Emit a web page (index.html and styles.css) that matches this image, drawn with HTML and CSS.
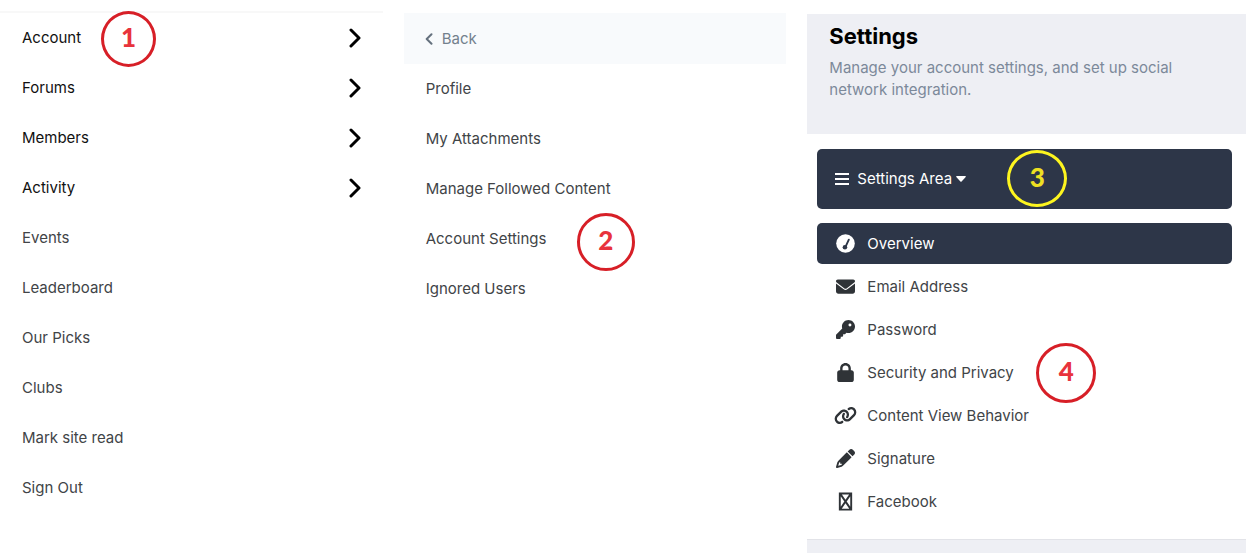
FILE: index.html
```html
<!DOCTYPE html>
<html lang="en">
<head>
<meta charset="utf-8">
<meta name="viewport" content="width=device-width, initial-scale=1">
<title>Account settings</title>
<link rel="stylesheet" href="styles.css">
</head>
<body>
<main class="screens">
  <nav class="screen menu" aria-label="Main menu">
    <ul class="menu-list">
      <li class="menu-row"><a class="menu-link parent" href="#">Account<svg class="chevron" viewBox="0 0 12 20"><path d="M2 2l8 8-8 8"/></svg></a><span class="callout callout-1">1</span></li>
      <li class="menu-row"><a class="menu-link parent" href="#">Forums<svg class="chevron" viewBox="0 0 12 20"><path d="M2 2l8 8-8 8"/></svg></a></li>
      <li class="menu-row"><a class="menu-link parent" href="#">Members<svg class="chevron" viewBox="0 0 12 20"><path d="M2 2l8 8-8 8"/></svg></a></li>
      <li class="menu-row"><a class="menu-link parent" href="#">Activity<svg class="chevron" viewBox="0 0 12 20"><path d="M2 2l8 8-8 8"/></svg></a></li>
      <li class="menu-row"><a class="menu-link" href="#">Events</a></li>
      <li class="menu-row"><a class="menu-link" href="#">Leaderboard</a></li>
      <li class="menu-row"><a class="menu-link" href="#">Our Picks</a></li>
      <li class="menu-row"><a class="menu-link" href="#">Clubs</a></li>
      <li class="menu-row"><a class="menu-link" href="#">Mark site read</a></li>
      <li class="menu-row"><a class="menu-link" href="#">Sign Out</a></li>
    </ul>
  </nav>

  <nav class="screen submenu" aria-label="Account menu">
    <button class="back" type="button"><svg class="back-icon" viewBox="0 0 8 12"><path d="M6.500 1.200L1.700 6l4.800 4.800"/></svg>Back</button>
    <ul class="menu-list">
      <li class="menu-row"><a class="menu-link" href="#">Profile</a></li>
      <li class="menu-row"><a class="menu-link" href="#">My Attachments</a></li>
      <li class="menu-row"><a class="menu-link" href="#">Manage Followed Content</a></li>
      <li class="menu-row"><a class="menu-link" href="#">Account Settings</a><span class="callout callout-2">2</span></li>
      <li class="menu-row"><a class="menu-link" href="#">Ignored Users</a></li>
    </ul>
  </nav>

  <section class="screen settings">
    <header class="settings-head">
      <h1 class="settings-title">Settings</h1>
      <p class="settings-text">Manage your account settings, and set up social network integration.</p>
    </header>
    <div class="settings-body">
      <div class="area">
        <button class="area-button" type="button">
          <svg class="bars" viewBox="0 0 14 12"><path d="M0 1h14M0 6h14M0 11h14"/></svg>
          <span>Settings Area</span>
          <svg class="caret" viewBox="0 0 10 6"><path d="M.800 0h8.400q1 .300.500 1L5.600 5.500q-.600.600-1.200 0L.300 1q-.500-.700.500-1z"/></svg>
        </button>
        <span class="callout callout-3">3</span>
      </div>
      <ul class="options">
        <li class="option-row"><a class="option current" href="#">
          <svg class="icon" viewBox="0 0 20 20"><circle cx="10" cy="10" r="9.800"/><path class="needle" d="M10 13.500L13.500 6"/><circle class="hub" cx="9.400" cy="14" r="2.400"/></svg>Overview</a></li>
        <li class="option-row"><a class="option" href="#">
          <svg class="icon" viewBox="0 0 512 512"><path d="M48 64C21.500 64 0 85.500 0 112c0 15.100 7.100 29.300 19.200 38.400L236.800 313.600c11.400 8.500 27 8.500 38.400 0L492.800 150.400c12.100-9.100 19.200-23.300 19.200-38.400 0-26.500-21.500-48-48-48H48zM0 176v208c0 35.300 28.700 64 64 64h384c35.300 0 64-28.700 64-64V176L294.400 339.200c-22.800 17.100-54 17.100-76.800 0L0 176z"/></svg>Email Address</a></li>
        <li class="option-row"><a class="option" href="#">
          <svg class="icon" viewBox="0 0 512 512"><path d="M336 352c97.200 0 176-78.800 176-176S433.200 0 336 0 160 78.800 160 176c0 18.700 2.900 36.800 8.300 53.700L7 391c-4.500 4.500-7 10.600-7 17v80c0 13.300 10.700 24 24 24h80c13.300 0 24-10.700 24-24v-40h40c13.300 0 24-10.700 24-24v-40h40c6.400 0 12.500-2.500 17-7l33.300-33.300c16.900 5.400 35 8.300 53.700 8.300zM376 96a40 40 0 1 1 0 80 40 40 0 1 1 0-80z"/></svg>Password</a></li>
        <li class="option-row"><a class="option" href="#">
          <svg class="icon" viewBox="-32 0 512 512"><path d="M144 144v48h160v-48c0-44.200-35.800-80-80-80s-80 35.800-80 80zM80 192v-48C80 64.500 144.500 0 224 0s144 64.500 144 144v48h16c35.300 0 64 28.700 64 64v192c0 35.300-28.700 64-64 64H64c-35.300 0-64-28.700-64-64V256c0-35.300 28.700-64 64-64h16z"/></svg>Security and Privacy</a><span class="callout callout-4">4</span></li>
        <li class="option-row"><a class="option" href="#">
          <svg class="icon wide" viewBox="0 0 640 512"><path d="M579.800 267.700c56.500-56.500 56.500-148 0-204.500-50-50-128.800-56.500-186.300-15.400l-1.600 1.100c-14.400 10.300-17.700 30.300-7.400 44.600s30.300 17.700 44.600 7.400l1.600-1.100c32.100-22.900 76-19.300 103.800 8.600 31.500 31.500 31.500 82.500 0 114L422.300 334.800c-31.500 31.500-82.500 31.500-114 0-27.900-27.900-31.500-71.800-8.600-103.800l1.100-1.600c10.300-14.400 6.900-34.400-7.400-44.600s-34.400-6.900-44.600 7.400l-1.100 1.600C206.500 251.200 213 330 263 380c56.500 56.500 148 56.500 204.500 0l112.300-112.300zM60.200 244.300c-56.500 56.500-56.500 148 0 204.500 50 50 128.800 56.500 186.300 15.400l1.600-1.100c14.400-10.300 17.700-30.300 7.400-44.600s-30.300-17.700-44.600-7.400l-1.600 1.100c-32.100 22.900-76 19.300-103.800-8.600C74 372 74 321 105.500 289.500l112.200-112.300c31.500-31.500 82.500-31.500 114 0 27.900 27.900 31.500 71.800 8.600 103.900l-1.100 1.600c-10.300 14.400-6.900 34.400 7.400 44.600s34.400 6.900 44.600-7.400l1.100-1.600C433.500 260.800 427 182 377 132c-56.500-56.500-148-56.500-204.500 0L60.200 244.300z"/></svg>Content View Behavior</a></li>
        <li class="option-row"><a class="option" href="#">
          <svg class="icon" viewBox="0 0 512 512"><path d="M410.300 231l11.300-11.300-33.900-33.900-62.100-62.100-33.900-33.900-11.300 11.300-22.600 22.600L58.600 322.900c-10.400 10.400-18 23.300-22.200 37.400L1 480.700c-2.500 8.400-.2 17.500 6.100 23.700s15.300 8.500 23.700 6.100l120.300-35.400c14.100-4.200 27-11.800 37.400-22.200l199.200-199.200 22.600-22.700zM160 399.400l-9.100 22.700c-4 3.100-8.500 5.400-13.300 6.900L59.400 452l23-78.100c1.400-4.900 3.800-9.400 6.900-13.300l22.700-9.100v32c0 8.800 7.200 16 16 16h32zM362.700 18.700l-48.100 48.100 130.600 130.600 48.100-48.100c25-25 25-65.500 0-90.500l-40.100-40.100c-25-25-65.500-25-90.500 0z"/></svg>Signature</a></li>
        <li class="option-row"><a class="option" href="#">
          <svg class="icon" viewBox="0 0 20 20"><path class="missing" d="M4 1.500h12v17H4zM4.500 2l11 16M15.500 2l-11 16"/></svg>Facebook</a></li>
      </ul>
    </div>
    <footer class="settings-foot"></footer>
  </section>
</main>
</body>
</html>
```
FILE: styles.css
```css
* {
  box-sizing: border-box;
}

body {
  margin: 0;
  background: #fff;
  color: #414447;
  font: 15px/22px Inter, "Liberation Sans", sans-serif;
}

a {
  color: inherit;
  text-decoration: none;
}

button {
  border: 0;
  font: inherit;
  cursor: pointer;
}

ul {
  margin: 0;
  padding: 0;
  list-style: none;
}

.screens {
  display: grid;
  grid-template-columns: 383fr 383fr 439fr;
  column-gap: 21px;
  min-height: 100vh;
}

.menu {
  padding-top: 11px;
}

.menu .menu-list {
  border-top: 2px solid #f8f8f8;
}

.submenu {
  padding-top: 13px;
}

.menu-row,
.option-row,
.area {
  position: relative;
}

.menu-link {
  display: flex;
  align-items: center;
  justify-content: space-between;
  height: 50px;
  padding: 0 22px;
}

.parent {
  color: #111;
}

.chevron {
  width: 12px;
  height: 20px;
  fill: none;
  stroke: #000;
  stroke-width: 3;
  stroke-linecap: round;
  stroke-linejoin: round;
}

.back {
  display: flex;
  align-items: center;
  gap: 9px;
  width: 100%;
  height: 51px;
  padding: 0 21px;
  background: #f8fafc;
  color: #73808c;
}

.back-icon {
  width: 8px;
  height: 12px;
  fill: none;
  stroke: #65717e;
  stroke-width: 2;
  stroke-linecap: round;
  stroke-linejoin: round;
}

.settings {
  display: flex;
  flex-direction: column;
  padding-top: 14px;
}

.settings-head {
  padding: 8px 22px 33px;
  background: #eeeff4;
}

.settings-title {
  margin: 0 0 7px;
  color: #000;
  font-size: 22px;
  line-height: 28px;
}

.settings-text {
  max-width: 380px;
  margin: 0;
  color: #7c899a;
}

.settings-body {
  padding: 15px 14px 17px 10px;
}

.area {
  margin-bottom: 14px;
}

.area-button {
  display: flex;
  align-items: center;
  width: 100%;
  height: 60px;
  padding: 0 18px;
  border-radius: 5px;
  background: #2d3648;
  color: #fff;
}

.bars {
  width: 14px;
  height: 12px;
  margin-right: 8px;
  stroke: currentColor;
  stroke-width: 2;
}

.caret {
  width: 10px;
  height: 6px;
  margin-left: 4px;
  fill: currentColor;
}

.options {
  display: grid;
  row-gap: 2px;
}

.option {
  display: flex;
  align-items: center;
  gap: 12px;
  height: 41px;
  padding: 0 19px;
  border-radius: 5px;
}

.current {
  background: #2d3648;
  color: #fff;
}

.icon {
  width: 19px;
  height: 19px;
  fill: #2f3337;
}

.wide {
  width: 23px;
  margin: 0 -2px;
}

.current .icon {
  fill: #fff;
}

.needle {
  fill: none;
  stroke: #2d3648;
  stroke-width: 2;
  stroke-linecap: round;
}

.current .hub {
  fill: #2d3648;
}

.missing {
  fill: none;
  stroke: #2f3337;
  stroke-width: 2;
}

.settings-foot {
  flex: 1;
  border-top: 1px solid #e2e3e8;
  background: #eeeff4;
}

.callout {
  position: absolute;
  display: flex;
  align-items: center;
  justify-content: center;
  padding-bottom: 4px;
  border: 3px solid #d71f27;
  border-radius: 50%;
  color: #e8333c;
  font: 900 26px/30px Lato, "Liberation Sans", sans-serif;
  pointer-events: none;
}

.callout-1 {
  top: -2px;
  left: 101px;
  width: 55px;
  height: 56px;
}

.callout-2 {
  top: -1px;
  left: 173px;
  width: 58px;
  height: 58px;
}

.callout-3 {
  top: 1px;
  left: 190px;
  width: 60px;
  height: 57px;
  border-color: #fdf51f;
  color: #eee022;
}

.callout-4 {
  top: -9px;
  left: 219px;
  width: 60px;
  height: 60px;
}
```
